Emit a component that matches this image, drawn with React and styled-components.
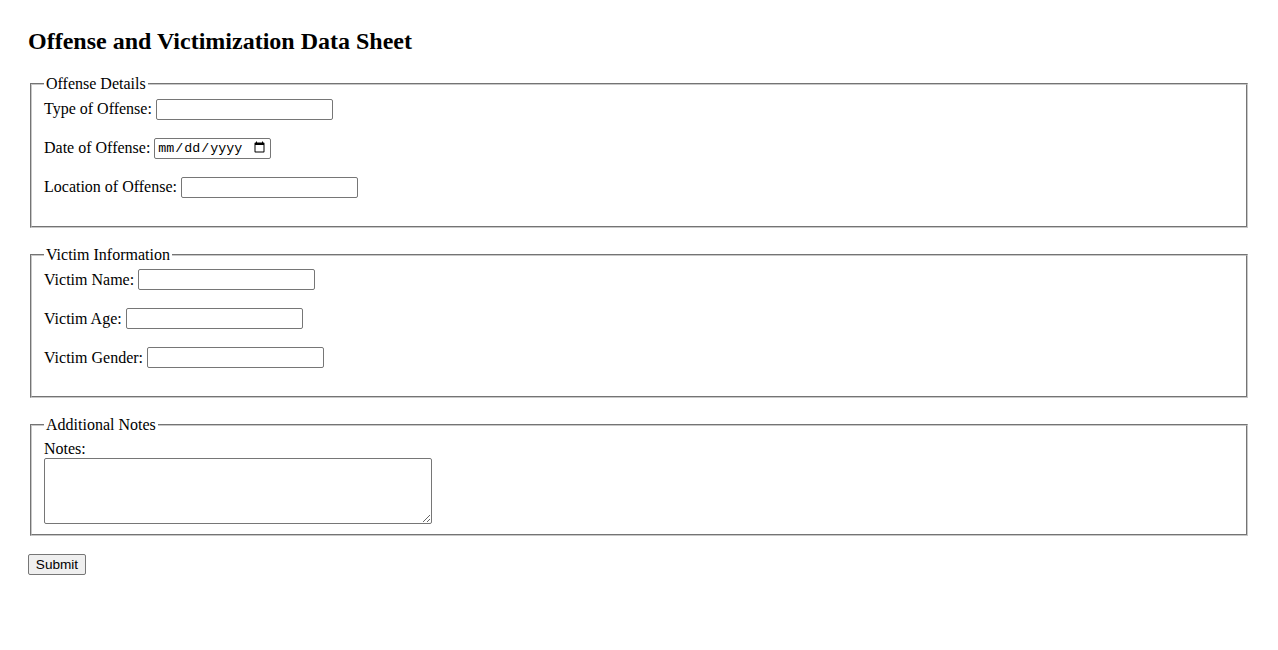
import React from "react";
import styled, { createGlobalStyle } from "styled-components";

const Global = createGlobalStyle`
  html, body { margin: 0; padding: 0; background: #fff; }
  body { font-family: "Liberation Serif", "Times New Roman", serif; font-size: 16px; color: #000; }
`;

const Page = styled.div`
  padding: 28px 28px 40px;
`;

const Title = styled.h2`
  margin: 0 0 20px;
  font-size: 24px;
  font-weight: bold;
  line-height: normal;
`;

const Form = styled.form`
  display: block;
`;

const Section = styled.fieldset`
  margin: 0 2px 18px;
  padding: 5.6px 12px 10px;
  border: 2px groove rgb(200, 200, 200);
  min-inline-size: min-content;
`;

const Legend = styled.legend`
  padding: 0 2px;
  font-size: 16px;
`;

const Row = styled.div`
  display: flex;
  align-items: center;
  height: 21px;
  margin-bottom: 18px;
`;

const Label = styled.label`
  display: ${(p) => (p.$block ? "block" : "inline")};
  margin-right: 4px;
  line-height: normal;
`;

const TextInput = styled.input`
  box-sizing: border-box;
  width: ${(p) => p.$w || "177px"};
  height: 21px;
  padding: 1px 2px;
  border: 1px solid #767676;
  border-radius: 2px;
  font-family: ${(p) => (p.type === "date" ? '"Liberation Mono", monospace' : '"Liberation Sans", Arial, sans-serif')};
  font-size: 13.33px;
  background: #fff;
  margin: 0;
`;

const NotesArea = styled.textarea`
  display: block;
  box-sizing: border-box;
  width: 388px;
  height: 66px;
  margin: 0;
  padding: 2px;
  border: 1px solid #767676;
  border-radius: 2px;
  font-family: "Liberation Mono", monospace;
  font-size: 13.33px;
`;

const SubmitButton = styled.button`
  display: block;
  box-sizing: border-box;
  width: 58px;
  margin: 1px 0 0;
  padding: 1px 6px;
  height: 21px;
  font-family: "Liberation Sans", Arial, sans-serif;
  font-size: 13.6px;
  color: #000;
  background: #efefef;
  border: 1px solid #767676;
  border-radius: 2px;
`;

const Field = ({ id, label, type = "text", w }) => (
  <Row>
    <Label htmlFor={id}>{label}</Label>
    <TextInput id={id} type={type} $w={w} />
  </Row>
);

export default function App() {
  return (
    <Page>
      <Global />
      <Title>Offense and Victimization Data Sheet</Title>
      <Form onSubmit={(e) => e.preventDefault()}>
        <Section>
          <Legend>Offense Details</Legend>
          <Field id="type" label="Type of Offense:" />
          <Field id="date" label="Date of Offense:" type="date" w="117px" />
          <Field id="loc" label="Location of Offense:" />
        </Section>
        <Section>
          <Legend>Victim Information</Legend>
          <Field id="vname" label="Victim Name:" />
          <Field id="vage" label="Victim Age:" />
          <Field id="vgender" label="Victim Gender:" />
        </Section>
        <Section>
          <Legend>Additional Notes</Legend>
          <Label htmlFor="notes" $block>Notes:</Label>
          <NotesArea id="notes" />
        </Section>
        <SubmitButton type="submit">Submit</SubmitButton>
      </Form>
    </Page>
  );
}
